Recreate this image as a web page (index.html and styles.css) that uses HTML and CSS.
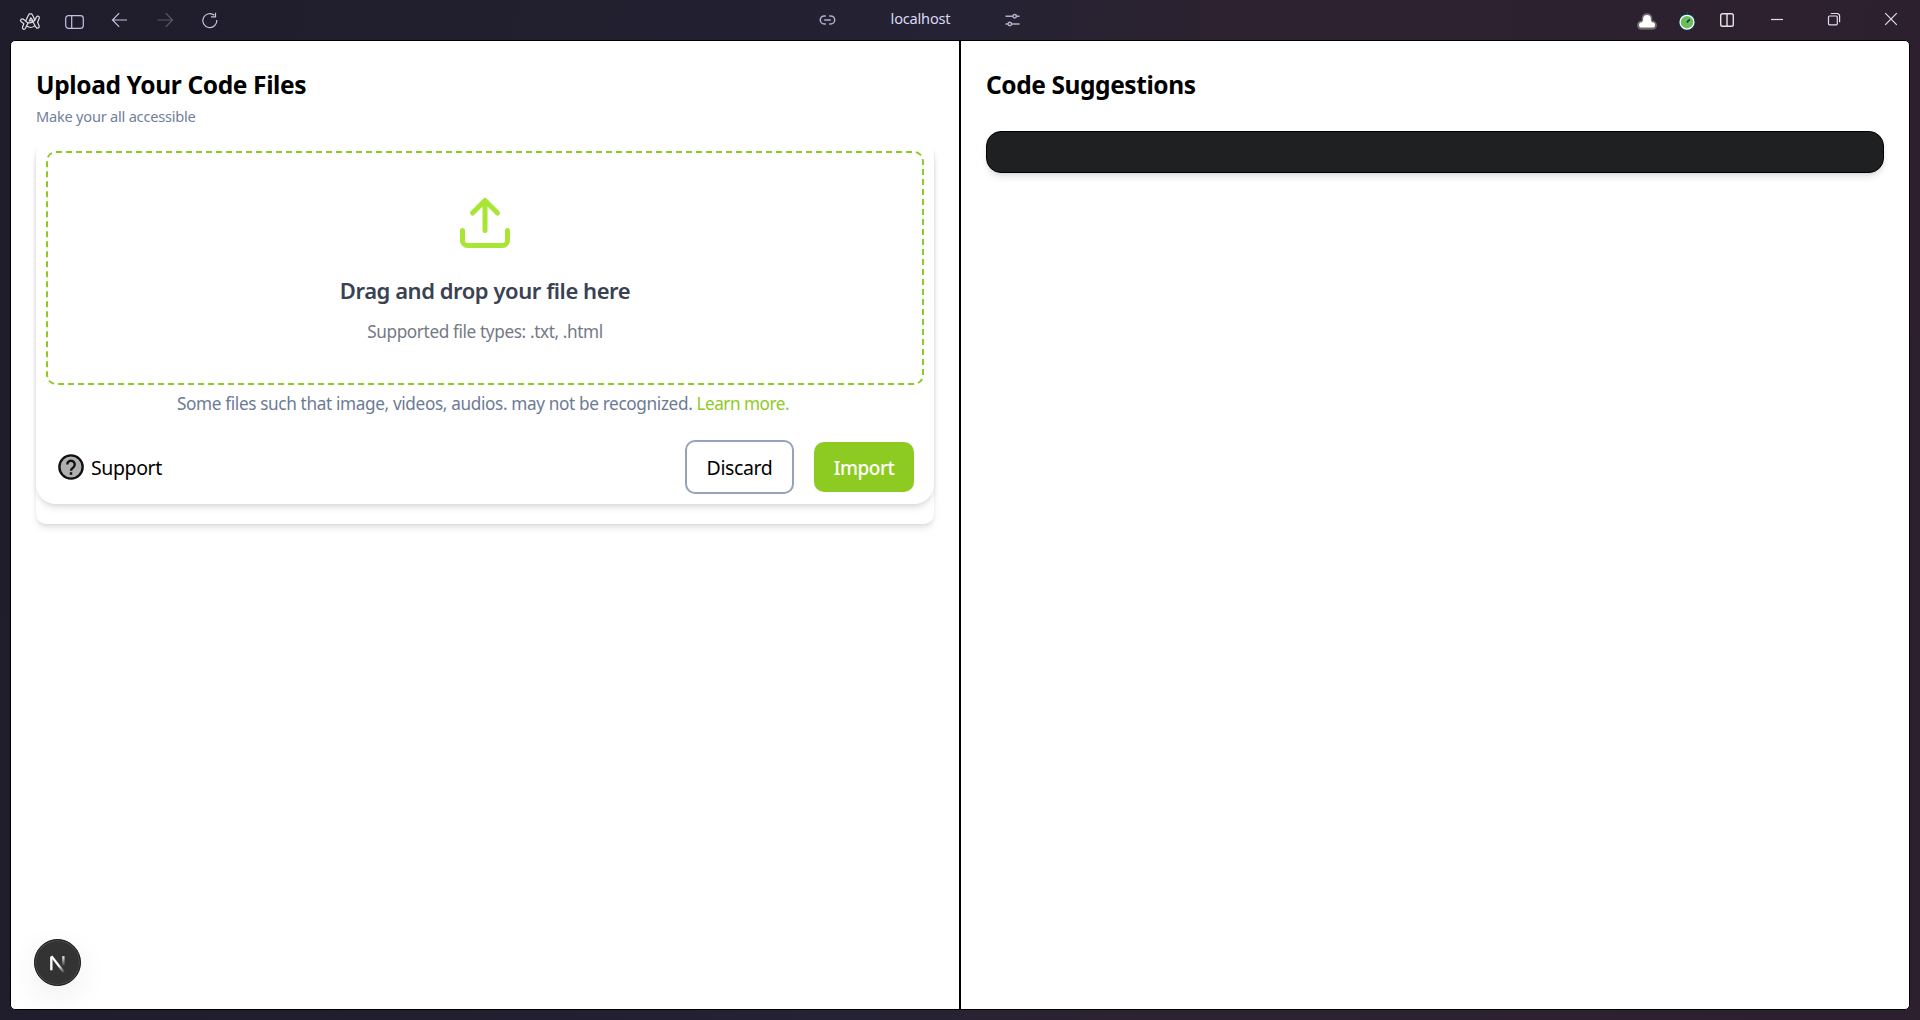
FILE: index.html
```html
<!DOCTYPE html>
<html lang="en">
<head>
<meta charset="utf-8">
<title>localhost</title>
<link rel="stylesheet" href="styles.css">
</head>
<body>
<div class="window">
  <header class="titlebar">
    <div class="nav">
      <svg class="icon logo" viewBox="0 0 24 24"><path d="M9.800 8.500 11.300 5.800h2.400l1.700 3 1.400 3.400 1.800-3.400c1-1.400 3.200-.5 2.700 1.200L19.600 14.200l1.600 4c.2 1.700-1.900 2.700-3 1.300L17 17.600c-2.400 2.200-6 2.200-8.400.2L7.400 20.500c-1.100 1.500-3.500.5-2.900-1.300l1.300-3.400L3 13.500c-1.200-1.500.4-3.400 2-2.400l2.700 2zM7.700 13.200c2.300 2.200 5.500 2.600 9.300-1M8.600 17.800l1.600-3M12.800 9.800l-1.500 3.200 3.500-.3zM14.800 13.500 17 17.600"/></svg>
      <svg class="icon lilac" viewBox="0 0 24 24"><rect x="2.700" y="7.700" width="17.600" height="12.600" rx="2.800"/><path d="M8.700 8v12"/></svg>
      <svg class="icon lilac" viewBox="0 0 24 24"><path d="M19 12H4.800M11.200 5.200 4.500 12l6.700 6.800"/></svg>
      <svg class="icon faded" viewBox="0 0 24 24"><path d="M4.500 12h14.800M12.800 5.200l6.700 6.800-6.700 6.800"/></svg>
      <svg class="icon lilac" viewBox="0 0 24 24"><path d="M16.400 7.300A7 7 0 1 0 18.800 12M17.500 4.800v4h-4.500"/></svg>
    </div>
    <div class="address">
      <svg class="icon lilac thick" viewBox="0 0 24 24"><path d="M10.800 7.900H9.300a4 4 0 0 0 0 8h1.500M14.200 7.900h1.500a4 4 0 0 1 0 8h-1.500M9.200 11.900h6.600"/></svg>
      <span class="host">localhost</span>
      <svg class="icon lilac thick" viewBox="0 0 24 24"><path d="M5.500 8.300h7.300M16.600 8.300h3M5.500 16h2.300M11.800 16h7.800"/><circle cx="14.700" cy="8.300" r="1.700"/><circle cx="9.800" cy="16" r="1.700"/></svg>
    </div>
    <div class="controls">
      <svg class="icon" viewBox="0 0 24 24"><g class="cloud-edge"><circle cx="12" cy="10.400" r="5.400"/><rect x="2" y="12.600" width="20" height="9.200" rx="4.600"/></g><g class="cloud"><circle cx="12" cy="11" r="3.900"/><path d="M8.300 11.500h7.400l1.500 3.500H6.800z"/><rect x="4" y="14.200" width="16" height="5.400" rx="2.700"/></g></svg>
      <svg class="icon watch" viewBox="0 0 24 24"><path class="watch-knob" d="M12 3.800v3M5.300 7l2 2M18.700 7l-2 2"/><circle class="watch-rim" cx="12" cy="14.200" r="8.400"/><circle class="watch-face" cx="12" cy="14.200" r="6.900"/><path class="watch-hand" d="M11.800 14.400l3-3"/></svg>
      <svg class="icon split" viewBox="0 0 24 24"><rect x="5.700" y="5.700" width="12.600" height="12.600" rx="1.800"/><path d="M12 6v12"/></svg>
      <svg class="icon bright minimize" viewBox="0 0 24 24"><path d="M6 11.500h12"/></svg>
      <svg class="icon bright restore" viewBox="0 0 24 24"><rect x="6.500" y="8" width="8.800" height="8.800" rx="1"/><path d="M8.800 5.500h6.200a2.600 2.600 0 0 1 2.600 2.600v6.200"/></svg>
      <svg class="icon bright close" viewBox="0 0 24 24"><path d="m6.200 5.200 11.600 11.600M17.800 5.200 6.200 16.800"/></svg>
    </div>
  </header>

  <main class="page">
    <section class="pane upload">
      <h1 class="title">Upload Your Code Files</h1>
      <p class="subtitle">Make your all accessible</p>
      <div class="stack">
        <div class="card">
          <div class="dropzone">
            <svg class="upload-icon" viewBox="0 0 24 24"><path d="M21 15v4a2 2 0 0 1-2 2H5a2 2 0 0 1-2-2v-4M17 8l-5-5-5 5M12 3v12"/></svg>
            <p class="drop-title">Drag and drop your file here</p>
            <p class="drop-types">Supported file types: .txt, .html</p>
          </div>
          <p class="note">Some files such that image, videos, audios. may not be recognized. <a class="learn">Learn more.</a></p>
          <div class="actions">
            <div class="support">
              <svg class="help" viewBox="0 0 24 24"><circle cx="12" cy="12" r="9.300"/><path d="M9 10a3 3 0 1 1 4.900 2.300c-1.100.9-1.900 1.300-1.900 2.700"/><rect x="11" y="16.200" width="2" height="2"/></svg>
              <span>Support</span>
            </div>
            <div class="buttons">
              <button class="btn discard">Discard</button>
              <button class="btn import">Import</button>
            </div>
          </div>
        </div>
      </div>
      <div class="badge">
        <svg class="next" viewBox="0 0 48 48">
          <defs>
            <linearGradient id="slant" gradientUnits="userSpaceOnUse" x1="27" y1="26" x2="32" y2="34"><stop offset="0" stop-color="#fff"/><stop offset="1" stop-color="#fff" stop-opacity="0"/></linearGradient>
            <linearGradient id="stem" gradientUnits="userSpaceOnUse" x1="30" y1="17" x2="30" y2="28"><stop offset="0" stop-color="#fff"/><stop offset="1" stop-color="#fff" stop-opacity="0"/></linearGradient>
          </defs>
          <path d="M17.700 32V18" stroke="#fff"/>
          <path d="M17.800 17.500 30.500 34" stroke="url(#slant)"/>
          <path d="M30 17.500v11" stroke="url(#stem)"/>
        </svg>
      </div>
    </section>
    <section class="pane suggestions">
      <h2 class="title">Code Suggestions</h2>
      <div class="output"></div>
    </section>
  </main>
</div>
</body>
</html>
```
FILE: styles.css
```css
* { box-sizing: border-box; }

body {
  margin: 0;
  font-family: "Noto Sans", "Open Sans", sans-serif;
  color: #000;
}

h1, h2, p { margin: 0; }

.window {
  display: flex;
  flex-direction: column;
  height: 1020px;
  padding: 0 10px 10px;
  overflow: hidden;
  background: linear-gradient(97deg, #1f1d2b 0%, #211f2e 25%, #242233 47%, #2c2230 60%, #2d202e 100%);
}

.titlebar {
  display: flex;
  align-items: center;
  flex: none;
  height: 40px;
  margin: 0 -10px;
}

.icon {
  display: block;
  flex: none;
  width: 24px;
  height: 24px;
  fill: none;
  stroke-width: 1.2;
}
.lilac { stroke: #c5c1e0; }
.faded { stroke: #5b586b; }
.bright { stroke: #e2dcf2; }
.split { stroke: #e6e2ea; stroke-width: 1.4; }
.thick { stroke-width: 1.5; stroke: #b3afca; }
.logo { stroke: #dedce2; stroke-width: 1.25; stroke-linejoin: round; }

.nav {
  display: flex;
  gap: 21px;
  width: 815px;
  padding-left: 18px;
}

.address {
  display: flex;
  align-items: center;
  justify-content: space-between;
  width: 209px;
}
.host {
  margin: -4px 0 0 2px;
  font-size: 14.6px;
  line-height: 20px;
  letter-spacing: -0.2px;
  color: #dcd8f3;
}

.controls {
  display: flex;
  gap: 16px;
  margin-left: auto;
  padding-right: 17px;
}
.minimize { margin-left: 10px; }
.restore, .close { margin-left: 17px; }
.cloud { fill: #fff; }
.cloud-edge { fill: #6d686e; }
.watch-knob { stroke: #123a56; stroke-width: 2; }
.watch-rim { fill: #123a56; }
.watch-face { fill: #6abf5b; stroke: #fff; stroke-width: 1.3; }
.watch-hand { stroke: #123a56; stroke-width: 1.6; }

.page {
  display: flex;
  flex: 1;
  overflow: hidden;
  border: 1px solid #000;
  border-radius: 5px;
  background: #fff;
}

.pane {
  position: relative;
  flex: 1 1 0;
  padding: 26px 25px 0;
}
.upload {
  flex: none;
  width: 950px;
  border-right: 2px solid #000;
}

.title {
  font-size: 24.5px;
  font-weight: 700;
  line-height: 35px;
  letter-spacing: -0.37px;
}
.suggestions .title { letter-spacing: -0.42px; }
.subtitle {
  margin-top: 2px;
  font-size: 14.6px;
  line-height: 25px;
  letter-spacing: -0.23px;
  color: #71809b;
}

.stack {
  margin-top: 12px;
  padding-bottom: 20px;
  border-radius: 10px;
  box-shadow: 0 5px 7.5px -1px rgba(0, 0, 0, .1), 0 2.500px 5px -2.500px rgba(0, 0, 0, .1);
}
.card {
  padding: 10px;
  border-radius: 20px;
  box-shadow: 0 5px 7.5px -1px rgba(0, 0, 0, .1), 0 2.500px 5px -2.500px rgba(0, 0, 0, .1);
}

.dropzone {
  display: flex;
  flex-direction: column;
  align-items: center;
  padding: 40px 0 39px;
  border: 2px dashed #8ecb22;
  border-radius: 10px;
}
.upload-icon {
  width: 60px;
  height: 60px;
  fill: none;
  stroke: #a9e534;
  stroke-width: 2;
  stroke-linecap: round;
  stroke-linejoin: round;
}
.drop-title {
  margin-top: 20px;
  font-size: 22px;
  font-weight: 600;
  line-height: 35px;
  letter-spacing: -0.45px;
  color: #394252;
}
.drop-types {
  margin-top: 11px;
  font-size: 17.2px;
  line-height: 25px;
  letter-spacing: -0.38px;
  color: #737985;
}

.note {
  margin-top: 6px;
  padding-right: 4px;
  font-size: 17.2px;
  line-height: 25px;
  letter-spacing: -0.36px;
  text-align: center;
  color: #6c7a94;
}
.learn {
  letter-spacing: -0.5px;
  color: #8ecb22;
}

.actions {
  display: flex;
  align-items: center;
  justify-content: space-between;
  margin-top: 24px;
  padding: 0 10px;
}
.support {
  display: flex;
  align-items: center;
  gap: 5px;
  font-size: 19.5px;
  letter-spacing: -0.4px;
}
.help { width: 30px; height: 30px; }
.help circle { fill: #b0b0b0; stroke: #111; stroke-width: 1.900; }
.help path { fill: none; stroke: #111; stroke-width: 1.900; }
.help rect { fill: #111; }

.buttons {
  display: flex;
  align-items: center;
  gap: 20px;
}
.btn {
  padding: 0;
  border: 0;
  border-radius: 10px;
  font-family: inherit;
  font-size: 19.5px;
}
.discard {
  width: 109px;
  height: 54px;
  border: 2px solid #94a2bb;
  background: #fff;
  color: #000;
  letter-spacing: -0.4px;
}
.import {
  width: 100px;
  height: 50px;
  padding-top: 2px;
  background: #8ecb22;
  color: #fff;
  font-size: 19px;
  font-weight: 500;
  letter-spacing: -0.5px;
}

.badge {
  position: absolute;
  left: 23px;
  bottom: 23px;
  width: 47px;
  height: 47px;
  border: 1px solid #111;
  border-radius: 50%;
  background: #333;
  box-shadow: inset 0 0 0 1px #4c4c4c, 0 10px 32px rgba(0, 0, 0, .07);
}
.next {
  display: block;
  width: 47px;
  height: 47px;
  margin: -1px;
  fill: none;
  stroke-width: 2.400;
}

.output {
  height: 42px;
  margin-top: 29px;
  border: 1px solid #000;
  border-radius: 15px;
  background: #1e2022;
  box-shadow: 0 5px 7.5px -1px rgba(0, 0, 0, .1), 0 2.500px 5px -2.500px rgba(0, 0, 0, .1);
}
```
